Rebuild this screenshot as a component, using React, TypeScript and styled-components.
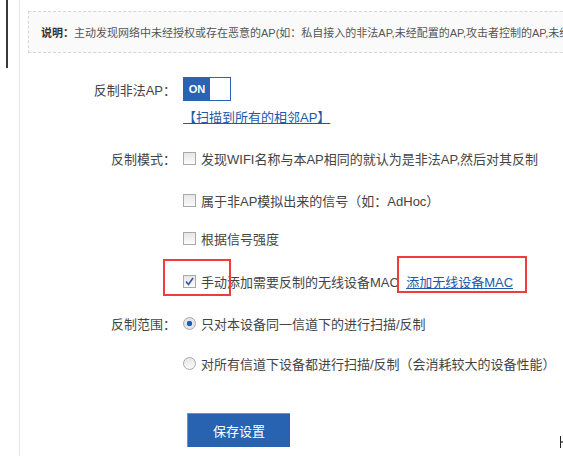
import React from 'react';
import styled, { createGlobalStyle } from 'styled-components';

const Global = createGlobalStyle`
  html, body { margin: 0; padding: 0; background: #fff; }
  body {
    font-family: "Liberation Sans", "Noto Sans CJK SC", sans-serif;
    color: #333;
  }
`;

const Shell = styled.div`
  display: flex;
  width: 563px;
  height: 456px;
  overflow: hidden;
  position: relative;
`;

const DarkRail = styled.div`
  flex: none;
  width: 2px;
  height: 68px;
  margin-left: 6px;
  background: #3a3a3a;
`;

const Main = styled.div`
  flex: 1;
  min-width: 0;
  margin-left: 11px;
  border-left: 1px solid #e4e4e4;
  display: flex;
  flex-direction: column;
`;

const Notice = styled.div`
  box-sizing: border-box;
  margin: 11px 0 0 8px;
  width: 700px;
  height: 42px;
  border: 1px dashed #d6d6d6;
  background: #fafafa;
  padding-left: 12px;
  display: flex;
  align-items: center;
  white-space: nowrap;
  font-size: 11px;
  color: #555;
  b { color: #333; }
`;

const Form = styled.div`
  display: flex;
  flex-direction: column;
  margin-top: 24px;
`;

const Line = styled.div<{ $gap: number; $h?: number }>`
  display: grid;
  grid-template-columns: 156px 1fr;
  column-gap: 7px;
  align-items: center;
  margin-top: ${p => p.$gap}px;
  height: ${p => p.$h ?? 20}px;
`;

const Label = styled.div`
  text-align: right;
  font-size: 13px;
  color: #444;
  white-space: nowrap;
`;

const Control = styled.div`
  display: flex;
  align-items: center;
  position: relative;
  font-size: 13px;
  color: #444;
  white-space: nowrap;
`;

const Toggle = styled.div`
  display: flex;
  width: 48px;
  height: 24px;
  box-sizing: border-box;
  border: 1px solid #2a63b2;
`;

const ToggleOn = styled.div`
  width: 26px;
  background: #2a63b2;
  color: #fff;
  font-size: 11px;
  font-weight: bold;
  display: flex;
  align-items: center;
  justify-content: center;
`;

const ToggleOff = styled.div`
  flex: 1;
  background: #fff;
`;

const Link = styled.a`
  color: #2159a8;
  text-decoration: underline;
  font-size: 13px;
  cursor: pointer;
`;

const Box = styled.span`
  box-sizing: border-box;
  width: 13px;
  height: 13px;
  margin-right: 5px;
  border: 1px solid #a9a9a9;
  background: linear-gradient(#e6e6e6, #fbfbfb);
  display: inline-flex;
  align-items: center;
  justify-content: center;
  flex: none;
`;

const Radio = styled.span<{ $checked?: boolean }>`
  box-sizing: border-box;
  width: 13px;
  height: 13px;
  margin-right: 5px;
  border-radius: 50%;
  border: 1px solid #a9a9a9;
  background: ${p => (p.$checked ? 'radial-gradient(circle, #1e5fae 0 2.5px, #dfe6ee 3px)' : 'linear-gradient(#e6e6e6, #fbfbfb)')};
  flex: none;
`;

const Mark = styled.span<{ $l: number; $t: number; $w: number; $h: number }>`
  position: absolute;
  left: ${p => p.$l}px;
  top: ${p => p.$t}px;
  width: ${p => p.$w}px;
  height: ${p => p.$h}px;
  box-sizing: border-box;
  border: 2px solid #ef3d3d;
  pointer-events: none;
`;

const SaveButton = styled.button`
  margin: 40px 0 0 167px;
  width: 103px;
  height: 34px;
  border: none;
  border-top: 1px solid #5d97d0;
  border-left: 1px solid #5d97d0;
  background: #2763b1;
  color: #fff;
  font-family: inherit;
  font-size: 13px;
  cursor: pointer;
`;

const Cursor = styled.span`
  position: absolute;
  left: 560px;
  top: 436px;
  width: 1px;
  height: 12px;
  background: #222;
  &::after {
    content: '';
    position: absolute;
    left: 1px;
    top: 5px;
    width: 2px;
    height: 2px;
    background: #777;
  }
`;

const Check = () => (
  <svg width="9" height="9" viewBox="0 0 9 9">
    <path d="M1 4.5 L3.5 7.5 L8 1" fill="none" stroke="#2d59a8" strokeWidth="1.6" />
  </svg>
);

export default function App() {
  return (
    <Shell>
      <Global />
      <DarkRail />
      <Main>
        <Notice>
          <b>说明：</b>主动发现网络中未经授权或存在恶意的AP(如：私自接入的非法AP,未经配置的AP,攻击者控制的AP,未经授权的AP)
        </Notice>
        <Form>
          <Line $gap={0} $h={24}>
            <Label>反制非法AP：</Label>
            <Control>
              <Toggle>
                <ToggleOn>ON</ToggleOn>
                <ToggleOff />
              </Toggle>
            </Control>
          </Line>
          <Line $gap={5}>
            <span />
            <Control>
              <Link>【扫描到所有的相邻AP】</Link>
            </Control>
          </Line>
          <Line $gap={22}>
            <Label>反制模式：</Label>
            <Control>
              <Box />发现WIFI名称与本AP相同的就认为是非法AP,然后对其反制
            </Control>
          </Line>
          <Line $gap={22}>
            <span />
            <Control>
              <Box />属于非AP模拟出来的信号（如：AdHoc）
            </Control>
          </Line>
          <Line $gap={18}>
            <span />
            <Control>
              <Box />根据信号强度
            </Control>
          </Line>
          <Line $gap={23}>
            <span />
            <Control>
              <Box>
                <Check />
              </Box>
              手动添加需要反制的无线设备MAC&nbsp;&nbsp;
              <Link>添加无线设备MAC</Link>
              <Mark $l={-20} $t={-13} $w={68} $h={37} />
              <Mark $l={214} $t={-16} $w={130} $h={37} />
            </Control>
          </Line>
          <Line $gap={22}>
            <Label>反制范围：</Label>
            <Control>
              <Radio $checked />只对本设备同一信道下的进行扫描/反制
            </Control>
          </Line>
          <Line $gap={20}>
            <span />
            <Control>
              <Radio />对所有信道下设备都进行扫描/反制（会消耗较大的设备性能）
            </Control>
          </Line>
          <div>
            <SaveButton>保存设置</SaveButton>
          </div>
        </Form>
      </Main>
      <Cursor />
    </Shell>
  );
}
